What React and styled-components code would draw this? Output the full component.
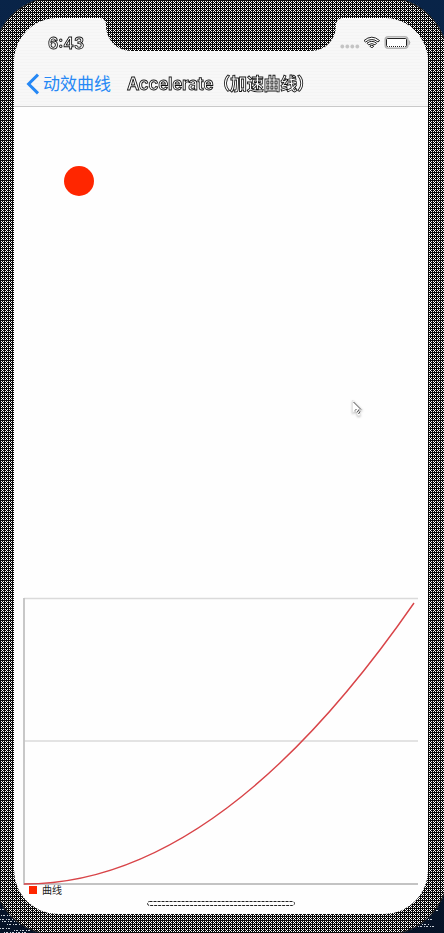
import React from "react";
import styled, { createGlobalStyle, css } from "styled-components";

const GlobalStyle = createGlobalStyle`
  *, *::before, *::after { box-sizing: border-box; }
  body { margin: 0; background: #082142; overflow: hidden; }
`;

const sans = `"Liberation Sans", "Noto Sans CJK SC", sans-serif`;
const heading = `Inter, "Noto Sans CJK SC", sans-serif`;

// One-pixel white dots on black: a 2px grid plus one extra dot per 4px tile.
const dither = css`
  background-color: #080808;
  background-image:
    conic-gradient(from 0deg at 3px 1px, #fff 25%, transparent 0),
    conic-gradient(from 0deg at 1px 1px, #fff 25%, transparent 0);
  background-size: 4px 4px, 2px 2px;
  background-position: 3px 2px, 0 1px;
  background-attachment: fixed;
`;

const Desktop = styled.div`
  position: relative;
  display: flex;
  width: 444px;
  height: 933px;
  overflow: hidden;
  background: linear-gradient(#092448, #081b35 65%, #061327);
`;

const Speckles = styled.svg`
  position: absolute;
  left: 0;
  bottom: 0;
`;

const Phone = styled.main`
  position: relative;
  flex: none;
  width: 455px;
  height: 938px;
  margin: -3px 0 0 -7px;
  padding: 21px 20px 21px 21px;
  border-radius: 62px;
  box-shadow: inset 0 0 0 1px #1c1c1c;
  ${dither}
`;

const Screen = styled.div`
  position: relative;
  display: flex;
  flex-direction: column;
  width: 414px;
  height: 896px;
  overflow: hidden;
  border-radius: 44px;
  background: #fefefe;
  font-family: ${sans};
`;

const Header = styled.header`
  height: 89px;
  border-bottom: 1px solid #c9c9c9;
  background: repeating-linear-gradient(#f7f7f7 0 2px, #f4f4f4 2px 3px);
`;

const Notch = styled.div`
  position: absolute;
  top: 0;
  left: 92px;
  width: 230px;
  height: 33px;
  border-radius: 0 0 25px 25px;
  ${dither}
`;

const Shoulder = styled.div`
  position: absolute;
  top: 0;
  left: ${(p) => (p.$right ? "322px" : "86px")};
  width: 6px;
  height: 6px;
  ${dither}
  mask-image: radial-gradient(circle at ${(p) => (p.$right ? "100%" : "0")} 100%, transparent 5.5px, #000 6px);
`;

const StatusBar = styled.div`
  display: flex;
  justify-content: space-between;
  height: 44px;
  padding: 15px 17px 0 34px;
`;

const outlined = css`
  color: #fff;
  -webkit-text-stroke: 0.85px #111;
  filter: grayscale(1);
`;

const Clock = styled.time`
  font: 600 16px/20px ${heading};
  ${outlined}
`;

const StatusIcons = styled.div`
  display: flex;
  align-items: center;
  height: 20px;
`;

const NavBar = styled.nav`
  display: flex;
  align-items: center;
  height: 44px;
  padding-left: 12px;
`;

const BackButton = styled.button`
  display: flex;
  align-items: center;
  gap: 3px;
  width: 101px;
  padding: 0;
  border: 0;
  background: none;
  color: #2688f5;
  font: 17px/24px ${sans};
  white-space: nowrap;
`;

const BackLabel = styled.span`
  padding-top: 1px;
`;

const Title = styled.h1`
  margin: 0;
  font: 600 17px/24px ${heading};
  letter-spacing: -0.25px;
  white-space: nowrap;
  ${outlined}
`;

const Stage = styled.section`
  position: relative;
  height: 487px;
`;

const Ball = styled.div`
  position: absolute;
  top: 59px;
  left: 50px;
  width: 30px;
  height: 30px;
  border-radius: 50%;
  background: #ff2600;
`;

const Pointer = styled.svg`
  position: absolute;
  top: 292px;
  left: 337px;
  filter: drop-shadow(0 1px 1px #bbb);
`;

const ChartArea = styled.figure`
  margin: 0;
`;

const Plot = styled.svg`
  display: block;
`;

const Legend = styled.figcaption`
  display: flex;
  align-items: center;
  gap: 5px;
  height: 13px;
  margin: -4px 0 0 15px;
  color: #222;
  font: 10px/13px ${sans};
`;

const Swatch = styled.span`
  width: 8px;
  height: 8px;
  margin-bottom: 2px;
  background: #ff2600;
`;

const HomeBar = styled.svg`
  display: block;
  margin: 3px 0 0 132px;
`;

export default function App() {
  return (
    <>
      <GlobalStyle />
      <Desktop>
        <Speckles width="444" height="40" viewBox="0 893 444 40" fill="none">
          <g stroke="#c9d0d8" strokeDasharray="1 1 2 2">
            <path d="M0 909.5H4M1 915.5H12M0 919.5H13M2 921.5H18M7 924.5H20M0 928.5H10M14 930.5H30M4 932.5H26" />
            <path d="M418 926.5H434M422 924.5H430M428 919.5H434M434 910.5H438" />
          </g>
        </Speckles>
        <Phone>
          <Screen>
            <Header>
              <StatusBar>
                <Clock>6:43</Clock>
                <StatusIcons>
                  <svg width="72" height="18" viewBox="339 34 72 18" fill="none">
                    <g fill="#c4c4c4">
                      <circle cx="342.3" cy="46.5" r="1.9" />
                      <circle cx="347.3" cy="46.5" r="1.9" />
                      <circle cx="352.3" cy="46.5" r="1.9" />
                      <circle cx="357.3" cy="46.5" r="1.9" />
                    </g>
                    <path d="M363.8 40.5Q371.8 33.8 379.8 40.5L371.8 48.3Z" fill="#fff" />
                    <g stroke="#222" strokeWidth="1">
                      <path d="M364 40.6Q371.8 33.8 379.6 40.6L378 42Q371.8 37 365.6 42Z" />
                      <path d="M367 43.2Q371.8 39.5 376.6 43.2L375 44.8Q371.8 42.3 368.6 44.8Z" />
                      <path d="M369.8 46Q371.8 44.5 373.8 46L371.8 48Z" fill="#fff" />
                    </g>
                    <rect x="385.2" y="36.8" width="22.6" height="11.4" rx="3" stroke="#b4b4b4" strokeWidth="1.5" />
                    <rect x="386.5" y="38.5" width="20" height="8" rx="1" fill="#fff" stroke="#222" strokeWidth="1" />
                    <path d="M388 46.5H406" stroke="#fff" strokeDasharray="1 1" />
                    <path d="M409 40.5Q411 42.5 409 44.8Z" fill="#aaa" stroke="#aaa" strokeWidth=".6" />
                  </svg>
                </StatusIcons>
              </StatusBar>
              <NavBar>
                <BackButton>
                  <svg width="14" height="22" viewBox="0 0 14 22" fill="none">
                    <path d="M12 1.6L2.6 11L12 20.4" stroke="#2688f5" strokeWidth="3" />
                  </svg>
                  <BackLabel>动效曲线</BackLabel>
                </BackButton>
                <Title>Accelerate（加速曲线）</Title>
              </NavBar>
            </Header>
            <Shoulder />
            <Notch />
            <Shoulder $right />
            <Stage>
              <Ball />
              <Pointer width="14" height="20" viewBox="0 0 14 20">
                <path d="M1.5 1V14L4.5 11.3L7 17L9.5 16L7.2 10.8H11.3Z" fill="#fff" stroke="#e3e3e3" strokeWidth=".7" />
                <path d="M2.5 3L10 10.5M4 11.5L5.5 10M6 13.5L8 10.5M7.5 15L9 12.5" stroke="#333" strokeWidth=".9" />
              </Pointer>
            </Stage>
            <ChartArea>
              <Plot width="414" height="294" viewBox="14 594 414 294" fill="none">
                <path d="M24 598.5H418M24 741H418" stroke="#dadada" strokeWidth="1.6" />
                <path d="M24 598V884H418" stroke="#c3c3c3" strokeWidth="1.8" />
                <path d="M24 884Q219 884 414 603" stroke="#d84448" strokeWidth="1.4" />
              </Plot>
              <Legend>
                <Swatch />
                曲线
              </Legend>
            </ChartArea>
            <HomeBar width="150" height="7" viewBox="0 0 150 7" fill="none">
              <rect x="1.5" y="1.5" width="147" height="4" rx="2" stroke="#222" strokeDasharray="3 1" />
            </HomeBar>
          </Screen>
        </Phone>
      </Desktop>
    </>
  );
}
